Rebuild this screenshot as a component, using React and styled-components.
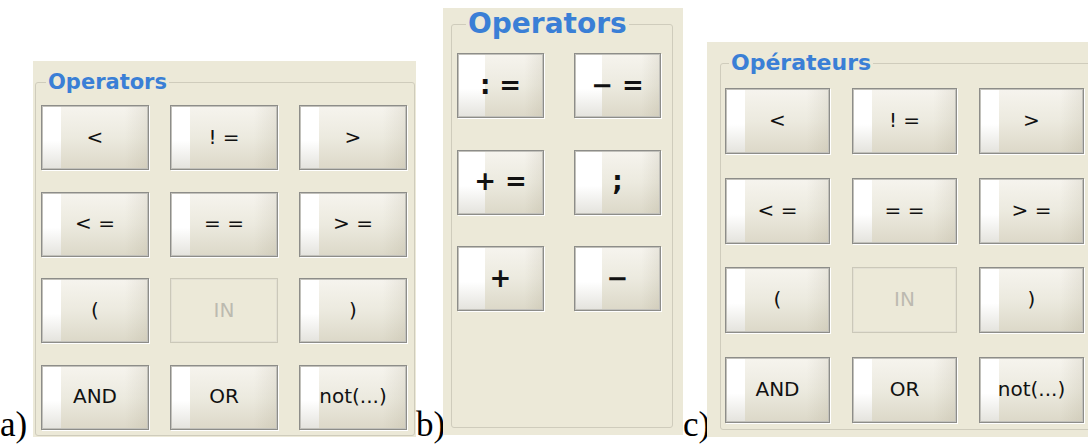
import React from 'react'
import styled, { createGlobalStyle } from 'styled-components'

const GlobalStyle = createGlobalStyle`
  html, body {
    margin: 0;
    padding: 0;
    background: #ffffff;
  }
  body {
    font-family: 'DejaVu Sans', sans-serif;
  }
`

const colors = {
  panel: '#ece9d8',
  frame: '#cfccbc',
  title: '#3a7fd6',
  border: '#8d8d89',
  disabled: '#bcbab0',
}

const Page = styled.div`
  display: flex;
  align-items: flex-end;
  width: 1088px;
  height: 444px;
  overflow: hidden;
`

const Figure = styled.div`
  display: flex;
  align-items: flex-end;
`

const Caption = styled.span`
  display: block;
  width: ${(p) => p.$width}px;
  font: 400 35px/35px 'Liberation Serif', serif;
  color: #000;
  margin-bottom: 2px;
  white-space: nowrap;
`

const Panel = styled.div`
  box-sizing: border-box;
  width: ${(p) => p.$width}px;
  height: ${(p) => p.$height}px;
  margin-bottom: ${(p) => p.$bottom}px;
  padding: ${(p) => p.$pad};
  background: ${colors.panel};
  overflow: hidden;
`

const GroupBox = styled.fieldset`
  box-sizing: border-box;
  height: 100%;
  width: ${(p) => (p.$width ? `${p.$width}px` : 'auto')};
  margin: 0;
  padding: ${(p) => p.$pad};
  border: 1px solid ${colors.frame};
  border-radius: 3px;
  min-width: 0;
`

const Title = styled.legend`
  margin-left: ${(p) => p.$indent}px;
  padding: 0 2px;
  font-family: 'DejaVu Sans', sans-serif;
  font-weight: 700;
  font-size: ${(p) => p.$size}px;
  line-height: ${(p) => p.$size}px;
  color: ${colors.title};
  white-space: nowrap;
`

const Grid = styled.div`
  display: grid;
  grid-template-columns: repeat(${(p) => p.$cols}, ${(p) => p.$w}px);
  grid-auto-rows: ${(p) => p.$h}px;
  column-gap: ${(p) => p.$colGap}px;
  row-gap: ${(p) => p.$rowGap}px;
`

const OpButton = styled.button`
  box-sizing: border-box;
  display: flex;
  align-items: center;
  justify-content: center;
  margin: 0;
  padding: 0 0 2px;
  font-family: 'DejaVu Sans', sans-serif;
  font-size: ${(p) => p.$size}px;
  font-weight: ${(p) => (p.$bold ? 700 : 400)};
  color: #111;
  white-space: pre;
  border: 1px solid ${colors.border};
  box-shadow: inset 0 0 0 1px #c2c1bb, 1px 1px 0 #ffffff;
  background:
    linear-gradient(to bottom, #ffffff 0%, #ffffff 55%, #e4e3dd 100%) left top / ${(p) => p.$stripe}px 100% no-repeat,
    linear-gradient(to right, rgba(255, 255, 255, 0) 78%, rgba(140, 130, 100, 0.13) 100%),
    linear-gradient(to bottom, #f6f4ee 0%, #eceadf 50%, #dcd8c8 100%);

  &:disabled {
    color: ${colors.disabled};
    border-color: #cbc8b9;
    box-shadow: inset 0 0 0 1px #e3e0d3;
    background: ${colors.panel};
  }
`

const panelA = [
  '<', '! =', '>',
  '< =', '= =', '> =',
  '(', 'IN', ')',
  'AND', 'OR', 'not(...)',
]

const panelB = [': =', '− =', '+ =', ';', '+', '−']

const OperatorPanel = ({ title, items, layout }) => (
  <Panel $width={layout.width} $height={layout.height} $bottom={layout.bottom} $pad={layout.pad}>
    <GroupBox $pad={layout.boxPad} $width={layout.boxWidth}>
      <Title $size={layout.titleSize} $indent={layout.indent}>
        {title}
      </Title>
      <Grid
        $cols={layout.cols}
        $w={layout.w}
        $h={layout.h}
        $colGap={layout.colGap}
        $rowGap={layout.rowGap}
      >
        {items.map((label) => (
          <OpButton
            key={label}
            disabled={label === 'IN'}
            $size={layout.textSize}
            $bold={layout.bold}
            $stripe={layout.stripe}
          >
            {label}
          </OpButton>
        ))}
      </Grid>
    </GroupBox>
  </Panel>
)

const layoutA = {
  width: 383, height: 376, bottom: 7, pad: '11px 1px 1px 2px',
  boxPad: '12px 5px 0 5px', titleSize: 21, indent: 5,
  cols: 3, w: 108, h: 65, colGap: 21, rowGap: 21.5,
  textSize: 20, stripe: 19,
}

const layoutB = {
  width: 240, height: 427, bottom: 9, pad: '2px 10px 7px 8px',
  boxPad: '15px 5px 0 5px', titleSize: 28, indent: 9,
  cols: 2, w: 87, h: 65, colGap: 30, rowGap: 31.5,
  textSize: 26, bold: true, stripe: 27,
}

const layoutC = {
  width: 381, height: 395, bottom: 7, pad: '10px 0 7px 13px',
  boxPad: '14px 5px 0 4px', boxWidth: 380, titleSize: 22, indent: 4,
  cols: 3, w: 105, h: 66, colGap: 22, rowGap: 23.7,
  textSize: 20, stripe: 19,
}

const App = () => (
  <>
    <GlobalStyle />
    <Page>
      <Figure>
        <Caption $width={33}>a)</Caption>
        <OperatorPanel title="Operators" items={panelA} layout={layoutA} />
      </Figure>
      <Figure>
        <Caption $width={27}>b)</Caption>
        <OperatorPanel title="Operators" items={panelB} layout={layoutB} />
      </Figure>
      <Figure>
        <Caption $width={24}>c)</Caption>
        <OperatorPanel title="Opérateurs" items={panelA} layout={layoutC} />
      </Figure>
    </Page>
  </>
)

export default App
